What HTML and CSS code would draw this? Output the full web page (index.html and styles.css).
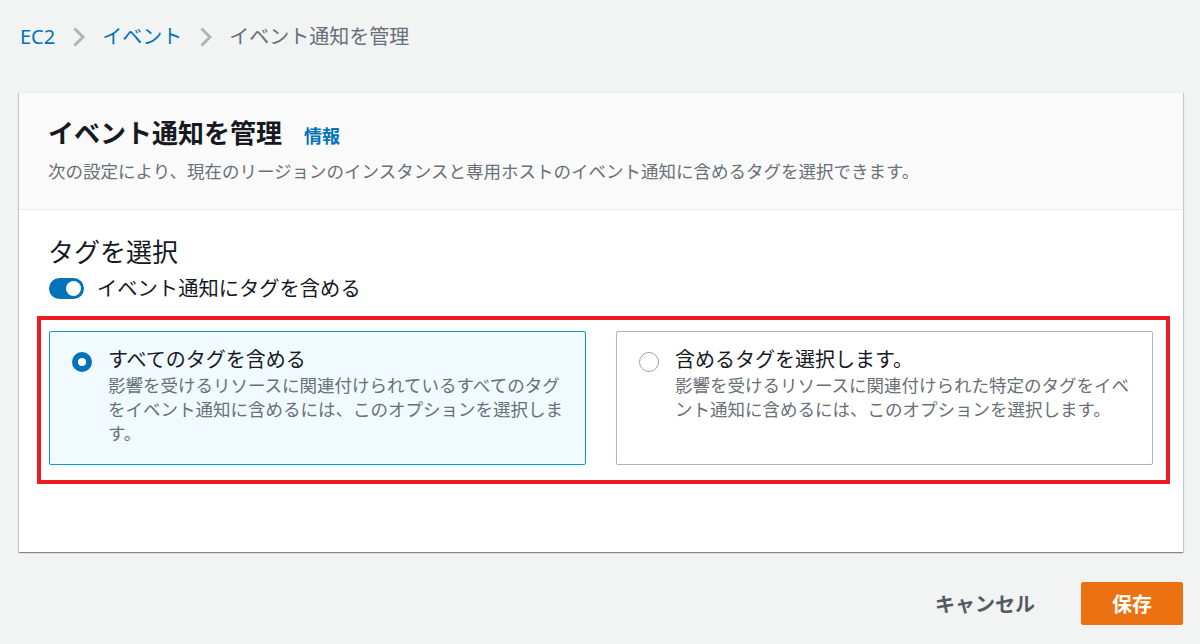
FILE: index.html
```html
<!DOCTYPE html>
<html lang="ja">
<head>
<meta charset="utf-8">
<link rel="stylesheet" href="styles.css">
</head>
<body>
<nav class="crumbs">
  <a class="crumb-link">EC2</a>
  <svg class="chev" width="12" height="20" viewBox="0 0 12 20"><polyline points="1.5,1.5 10,10 1.5,18.5" fill="none" stroke="#aab7b8" stroke-width="3"/></svg>
  <a class="crumb-link">イベント</a>
  <svg class="chev" width="12" height="20" viewBox="0 0 12 20"><polyline points="1.5,1.5 10,10 1.5,18.5" fill="none" stroke="#aab7b8" stroke-width="3"/></svg>
  <span class="crumb-current">イベント通知を管理</span>
</nav>

<section class="card">
  <header class="card-head">
    <h1 class="title">イベント通知を管理<a class="info">情報</a></h1>
    <p class="desc">次の設定により、現在のリージョンのインスタンスと専用ホストのイベント通知に含めるタグを選択できます。</p>
  </header>
  <div class="card-body">
    <h2 class="section-title">タグを選択</h2>
    <div class="toggle-row">
      <span class="toggle"><span class="knob"></span></span>
      <span class="toggle-label">イベント通知にタグを含める</span>
    </div>
    <div class="tiles">
      <div class="tile selected">
        <span class="radio on"></span>
        <div class="tile-text">
          <div class="tile-title">すべてのタグを含める</div>
          <div class="tile-desc">影響を受けるリソースに関連付けられているすべてのタグをイベント通知に含めるには、このオプションを選択します。</div>
        </div>
      </div>
      <div class="tile">
        <span class="radio"></span>
        <div class="tile-text">
          <div class="tile-title">含めるタグを選択します。</div>
          <div class="tile-desc">影響を受けるリソースに関連付けられた特定のタグをイベント通知に含めるには、このオプションを選択します。</div>
        </div>
      </div>
      <div class="highlight"></div>
    </div>
  </div>
</section>

<footer class="actions">
  <button class="btn-cancel">キャンセル</button>
  <button class="btn-save">保存</button>
</footer>
</body>
</html>
```

FILE: styles.css
```css
* { box-sizing: border-box; }
html, body { margin: 0; }
body {
  background: #f2f3f3;
  padding: 0 17px 0 19px;
  font-family: "Noto Sans", "Noto Sans CJK JP", sans-serif;
  color: #16191f;
}
.crumbs {
  display: flex;
  align-items: center;
  height: 28px;
  margin-top: 23px;
  padding-left: 1px;
  font-size: 20px;
  line-height: 28px;
}
.crumb-link { color: #0073bb; }
.chev { margin: 0 17px 0 18px; }
.crumb-current { color: #687078; }

.card {
  margin-top: 41px;
  background: #fff;
  border-top: 1px solid #eaeded;
  box-shadow: 0 1px 1px 0 rgba(0,28,36,.3), 1px 1px 1px 0 rgba(0,28,36,.15), -1px 1px 1px 0 rgba(0,28,36,.15);
}
.card-head {
  background: #fafafa;
  border-bottom: 1px solid #eaeded;
  padding: 23px 29px 25px 29px;
}
.title {
  margin: 0;
  font-size: 26px;
  line-height: 34px;
  font-weight: 700;
  display: flex;
  align-items: baseline;
}
.info {
  color: #0073bb;
  font-size: 18px;
  font-weight: 700;
  margin-left: 22px;
}
.desc {
  margin: 5px 0 0;
  font-size: 17.5px;
  line-height: 26px;
  color: #687078;
}
.card-body {
  padding: 25px 30px 87px 29px;
}
.section-title {
  margin: 0;
  font-size: 26px;
  line-height: 34px;
  font-weight: 400;
}
.toggle-row {
  display: flex;
  align-items: center;
  height: 28px;
  margin-top: 5px;
}
.toggle {
  width: 35px;
  height: 21px;
  border-radius: 11px;
  background: #0073bb;
  display: flex;
  align-items: center;
  justify-content: flex-end;
  padding-right: 3px;
  margin-left: 1px;
}
.knob {
  width: 15px;
  height: 15px;
  border-radius: 50%;
  background: #fff;
}
.toggle-label {
  margin-left: 13px;
  font-size: 20.3px;
  line-height: 28px;
}
.tiles {
  position: relative;
  display: grid;
  grid-template-columns: 1fr 1fr;
  gap: 30px;
  margin-top: 29px;
  margin-left: 1px;
}
.tile {
  display: flex;
  align-items: flex-start;
  border: 1px solid #aab7b8;
  border-radius: 2px;
  background: #fff;
  padding: 15px 20px 19px 22px;
}
.tile.selected {
  background: #f1faff;
  border-color: #00a1c9;
}
.radio {
  flex: none;
  width: 20px;
  height: 20px;
  border-radius: 50%;
  border: 1.5px solid #9aa6a8;
  background: #fff;
  margin-top: 5px;
}
.radio.on {
  border: 6px solid #0073bb;
}
.tile-text {
  margin-left: 16px;
  flex: 1;
}
.tile-title {
  font-size: 20px;
  line-height: 26px;
}
.tile-desc {
  font-size: 17.5px;
  line-height: 24px;
  color: #687078;
}
.highlight {
  position: absolute;
  top: -15px;
  left: -12px;
  right: -17px;
  bottom: -19px;
  border: 4px solid #ed1c24;
  pointer-events: none;
}
.actions {
  display: flex;
  justify-content: flex-end;
  align-items: center;
  margin-top: 30px;
}
.btn-cancel {
  font-family: inherit;
  background: none;
  border: none;
  font-size: 20px;
  font-weight: 700;
  color: #545b64;
  padding: 0 20px;
  height: 43px;
  margin-right: 26px;
}
.btn-save {
  font-family: inherit;
  width: 102px;
  height: 43px;
  background: #ec7211;
  border: 1px solid #ec7211;
  border-radius: 2px;
  color: #fff;
  font-size: 20px;
  font-weight: 700;
  padding: 0;
}
```
